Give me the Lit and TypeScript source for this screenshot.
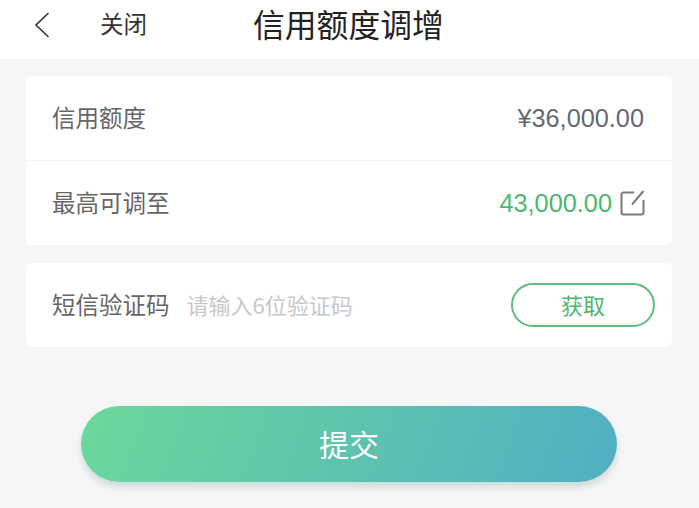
import { LitElement, html, css } from "lit";
import { customElement } from "lit/decorators.js";

@customElement("app-root")
export class AppRoot extends LitElement {
  static styles = css`
    :host {
      display: block;
      width: 699px;
      height: 508px;
      overflow: hidden;
      background: #f6f6f6;
      font-family: "Noto Sans CJK SC", "Liberation Sans", sans-serif;
    }
    .header {
      height: 59px;
      background: #fff;
      display: flex;
      align-items: center;
      padding-bottom: 10px;
      box-sizing: border-box;
    }
    .back {
      width: 16px;
      height: 28px;
      margin-left: 34px;
      flex: none;
    }
    .close {
      margin-left: 50px;
      font-size: 23.5px;
      line-height: 28px;
      color: #333;
      margin-bottom: 4px;
    }
    .title {
      margin-left: 106px;
      font-size: 31.8px;
      line-height: 40px;
      color: #222;
      white-space: nowrap;
      margin-bottom: 4px;
    }
    .main {
      padding: 17px 27px 0 26px;
      display: flex;
      flex-direction: column;
    }
    .card {
      background: #fff;
      border-radius: 5px;
      display: flex;
      flex-direction: column;
    }
    .card + .card {
      margin-top: 18px;
    }
    .row {
      display: flex;
      align-items: center;
      justify-content: space-between;
      padding: 0 27px 0 26px;
      height: 84px;
      box-sizing: border-box;
    }
    .row.top {
      height: 85px;
      padding-right: 28px;
      border-bottom: 1px solid #f6f6f6;
    }
    .label {
      font-size: 23.5px;
      color: #666;
      line-height: 30px;
      white-space: nowrap;
      margin-bottom: 2px;
    }
    .value {
      font-family: "Liberation Sans", sans-serif;
      font-size: 25.3px;
      color: #666a70;
    }
    .value.green {
      color: #4fb76f;
    }
    .right {
      display: flex;
      align-items: center;
      gap: 8px;
    }
    .edit {
      width: 25px;
      height: 26px;
      flex: none;
    }
    .sms {
      padding-right: 17px;
    }
    .left {
      display: flex;
      align-items: center;
      gap: 17px;
    }
    .placeholder {
      font-size: 22px;
      color: #c8c8c8;
      line-height: 30px;
      white-space: nowrap;
      margin-bottom: 2px;
    }
    .get {
      width: 144px;
      height: 44px;
      box-sizing: border-box;
      border: 2px solid #5dbb7e;
      border-radius: 22px;
      display: flex;
      align-items: center;
      justify-content: center;
      color: #4fb76f;
      font-size: 22px;
      padding-bottom: 2px;
      background: #fff;
    }
    .submit {
      margin: 59px 55px 0 55px;
      height: 76px;
      border-radius: 38px;
      background: linear-gradient(110deg, #6bd89a 0%, #52aec4 100%);
      box-shadow: 0 5px 7px rgba(90, 130, 130, 0.24);
      display: flex;
      align-items: center;
      justify-content: center;
      color: #fff;
      font-size: 30px;
      padding-bottom: 2px;
      box-sizing: border-box;
    }
  `;

  render() {
    return html`
      <div class="header">
        <svg class="back" viewBox="0 0 16 28" fill="none">
          <path d="M14.5 2 L2 14 L14.5 26" stroke="#333" stroke-width="1.6" />
        </svg>
        <span class="close">关闭</span>
        <span class="title">信用额度调增</span>
      </div>
      <div class="main">
        <div class="card">
          <div class="row top">
            <span class="label">信用额度</span>
            <span class="value">¥36,000.00</span>
          </div>
          <div class="row">
            <span class="label">最高可调至</span>
            <span class="right">
              <span class="value green">43,000.00</span>
              <svg class="edit" viewBox="0 0 25 26" fill="none">
                <path
                  d="M14 2.5 H3.5 a2 2 0 0 0 -2 2 V22.5 a2 2 0 0 0 2 2 H21.5 a2 2 0 0 0 2 -2 V10"
                  stroke="#77797c"
                  stroke-width="2"
                />
                <path d="M12 14.5 L23.5 1" stroke="#77797c" stroke-width="2" />
              </svg>
            </span>
          </div>
        </div>
        <div class="card">
          <div class="row sms">
            <span class="left">
              <span class="label">短信验证码</span>
              <span class="placeholder">请输入6位验证码</span>
            </span>
            <span class="get">获取</span>
          </div>
        </div>
        <div class="submit">提交</div>
      </div>
    `;
  }
}
